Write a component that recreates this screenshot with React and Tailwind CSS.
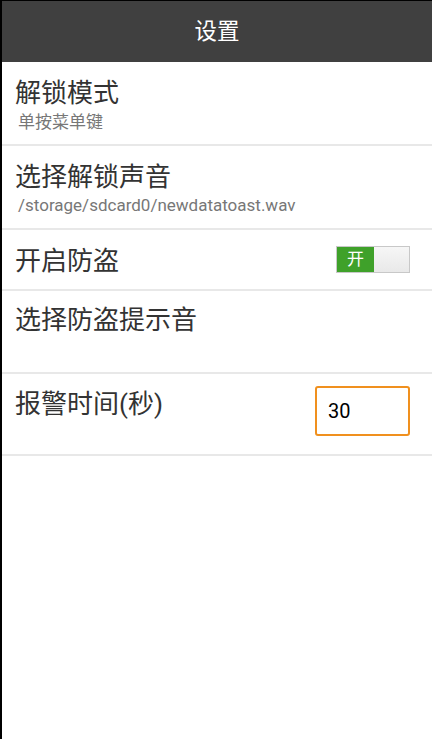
import React from 'react';

const font = { fontFamily: 'Roboto, "Noto Sans CJK SC", sans-serif' };

const Divider = () => <div className="h-[2px] bg-[#e8e8e8]"></div>;

const App = () => {
    return (
        <div className="w-[432px] h-[739px] bg-white border-l-2 border-black flex flex-col" style={font}>
            {/* Title bar */}
            <div className="h-[62px] bg-[#404040] border-t border-black flex items-center justify-center">
                <span className="text-[22.5px] leading-none text-white">设置</span>
            </div>

            {/* Unlock mode */}
            <div className="h-[82px] px-[13px] pt-[16px]">
                <div className="text-[26px] leading-[30px] text-[#333333]">解锁模式</div>
                <div className="mt-[3px] pl-[3px] text-[17px] leading-[22px] text-[#777777]">单按菜单键</div>
            </div>
            <Divider />

            {/* Unlock sound */}
            <div className="h-[82px] px-[13px] pt-[16px]">
                <div className="text-[26px] leading-[30px] text-[#333333]">选择解锁声音</div>
                <div className="mt-[2px] pl-[3px] text-[17px] leading-[22px] text-[#777777]">/storage/sdcard0/newdatatoast.wav</div>
            </div>
            <Divider />

            {/* Anti-theft switch */}
            <div className="h-[59px] px-[13px] flex items-center justify-between">
                <div className="text-[26px] leading-[30px] text-[#333333] pt-[2px]">开启防盗</div>
                <div className="mr-[9px] flex h-[27px] w-[74px] border border-[#c8c8c8]">
                    <div className="w-[37px] bg-[#3fa12a] flex items-center justify-center text-[17px] leading-none text-white">开</div>
                    <div className="flex-1 bg-gradient-to-b from-[#f6f6f6] to-[#e9e9e9]"></div>
                </div>
            </div>
            <Divider />

            {/* Anti-theft tone */}
            <div className="h-[81px] px-[13px] pt-[14px]">
                <div className="text-[26px] leading-[30px] text-[#333333]">选择防盗提示音</div>
            </div>
            <Divider />

            {/* Alarm time */}
            <div className="h-[80px] px-[13px] flex items-start justify-between">
                <div className="pt-[15px] text-[26px] leading-[30px] text-[#333333]">报警时间(秒)</div>
                <div className="mt-[12px] mr-[9px] w-[95px] h-[50px] rounded-[3px] border-2 border-[#f0901e] bg-white flex items-center px-[11px] text-[20px] text-black">
                    30
                </div>
            </div>
            <Divider />

            <div className="flex-1"></div>
        </div>
    );
};

export default App;
